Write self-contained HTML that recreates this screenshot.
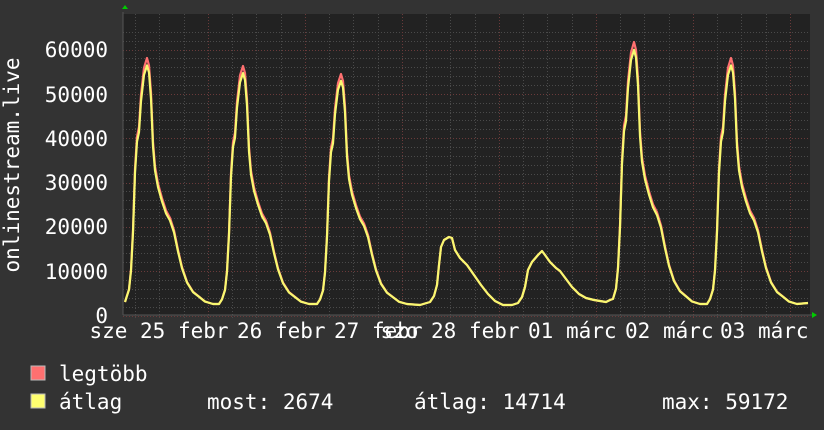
<!DOCTYPE html>
<html><head><meta charset="utf-8"><style>
html,body{margin:0;padding:0;background:#333;}
svg{display:block;}
text{font-family:"DejaVu Sans Mono","Liberation Mono",monospace;font-size:21px;fill:#fff;white-space:pre;}
</style></head><body>
<svg width="824" height="430" viewBox="0 0 824 430" xmlns="http://www.w3.org/2000/svg" xml:space="preserve">
<rect width="824" height="430" fill="#333"/>
<rect x="123" y="14" width="687" height="301" fill="#222"/>
<g id="grid"></g>
<g id="curves"></g>
<line x1="123" y1="315" x2="812" y2="315" stroke="#555" stroke-width="1"/>
<line x1="123" y1="12" x2="123" y2="315" stroke="#555" stroke-width="1"/>
<polygon points="122,9 128,9 125,5" fill="#0c0"/>
<polygon points="812,312 812,318 817,315" fill="#0c0"/>
<g text-anchor="end">
<text x="108" y="57">60000</text>
<text x="108" y="102">50000</text>
<text x="108" y="146">40000</text>
<text x="108" y="190">30000</text>
<text x="108" y="234">20000</text>
<text x="108" y="279">10000</text>
<text x="108" y="323">0</text>
</g>
<text transform="translate(19,165) rotate(-90)" text-anchor="middle">onlinestream.live</text>
<g text-anchor="middle">
<text x="159" y="338">sze 25 febr</text>
<text x="256" y="338">    26 febr</text>
<text x="353" y="338">    27 febr</text>
<text x="450" y="338">szo 28 febr</text>
<text x="547" y="338">    01 márc</text>
<text x="644" y="338">    02 márc</text>
<text x="739" y="338">    03 márc</text>
</g>
<rect x="31" y="366" width="14" height="14" fill="#ff7070" stroke="#bbb" stroke-width="1"/>
<rect x="31" y="394" width="14" height="14" fill="#ffff70" stroke="#bbb" stroke-width="1"/>
<text x="59" y="381">legtöbb</text>
<text x="59" y="409">átlag</text>
<text x="207" y="409">most: 2674</text>
<text x="414" y="409">átlag: 14714</text>
<text x="662" y="409">max: 59172</text>
</svg>
<script>
var ns="http://www.w3.org/2000/svg";
var g=document.getElementById('grid');
function ln(x1,y1,x2,y2,c){var l=document.createElementNS(ns,'line');l.setAttribute('x1',x1);l.setAttribute('y1',y1);l.setAttribute('x2',x2);l.setAttribute('y2',y2);l.setAttribute('stroke',c);l.setAttribute('stroke-width',1);l.setAttribute('stroke-dasharray','1,2');g.appendChild(l);}
for(var v=0;v<=64000;v+=2000){var y=315.5-v*0.004433;if(y<14)break;ln(123,Math.round(y)+.5,810,Math.round(y)+.5,v%10000==0?'#6a3a3a':'#4a4a4a');}
for(var x=135;x<810;x+=24.25){var rx=Math.round(x)+.5;var major=Math.abs(((x-208)/97)-Math.round((x-208)/97))<0.05;ln(rx,14,rx,318,major?'#6a3a3a':'#4a4a4a');}
var T=[[-24,0],[-21,.02],[-18,.06],[-16,.14],[-14,.3],[-12,.55],[-10,.68],[-8,.72],[-6,.85],[-3,.96],[0,1],[2,.97],[4,.86],[6,.66],[8,.56],[11,.49],[15,.43],[19,.38],[23,.35],[27,.3],[31,.22],[35,.15],[40,.09],[46,.05],[52,.03],[58,.01],[66,0]];
var B=304;
function day(px,amp,k){return T.map(function(p){return [px+p[0],B-p[1]*amp*k];});}
function build(k){
var pts=[[125,302]];
pts=pts.concat(day(147,246,k).slice(2));
pts=pts.concat(day(243,238,k));
pts=pts.concat(day(341,230,k));
pts=pts.concat([[420,305],[430,302],[434,296],[437,285],[439,265],[441,247],[444,240],[449,237],[452,238],[455,250],[460,258],[467,265],[474,275],[481,285],[488,294],[495,301],[503,305],[512,305],[518,303],[522,297],[525,287],[528,270],[532,262],[538,255],[542,251],[545,255],[550,262],[556,268],[560,271],[566,279],[572,287],[579,294],[586,298],[594,300],[600,301],[606,302],[610,300]]);
pts=pts.concat(day(634,262,k).slice(1));
pts=pts.concat(day(731,246,k));
pts.push([808,303]);
return pts.map(function(p){return p[0].toFixed(1)+','+p[1].toFixed(1);}).join(' ');}
var c=document.getElementById('curves');
function pl(pts,col){var p=document.createElementNS(ns,'polyline');p.setAttribute('points',pts);p.setAttribute('fill','none');p.setAttribute('stroke',col);p.setAttribute('stroke-width',2.2);p.setAttribute('stroke-linejoin','round');c.appendChild(p);}
pl(build(1.0),'#ff7070');
pl(build(0.97),'#f8f870');
</script>
</body></html>
